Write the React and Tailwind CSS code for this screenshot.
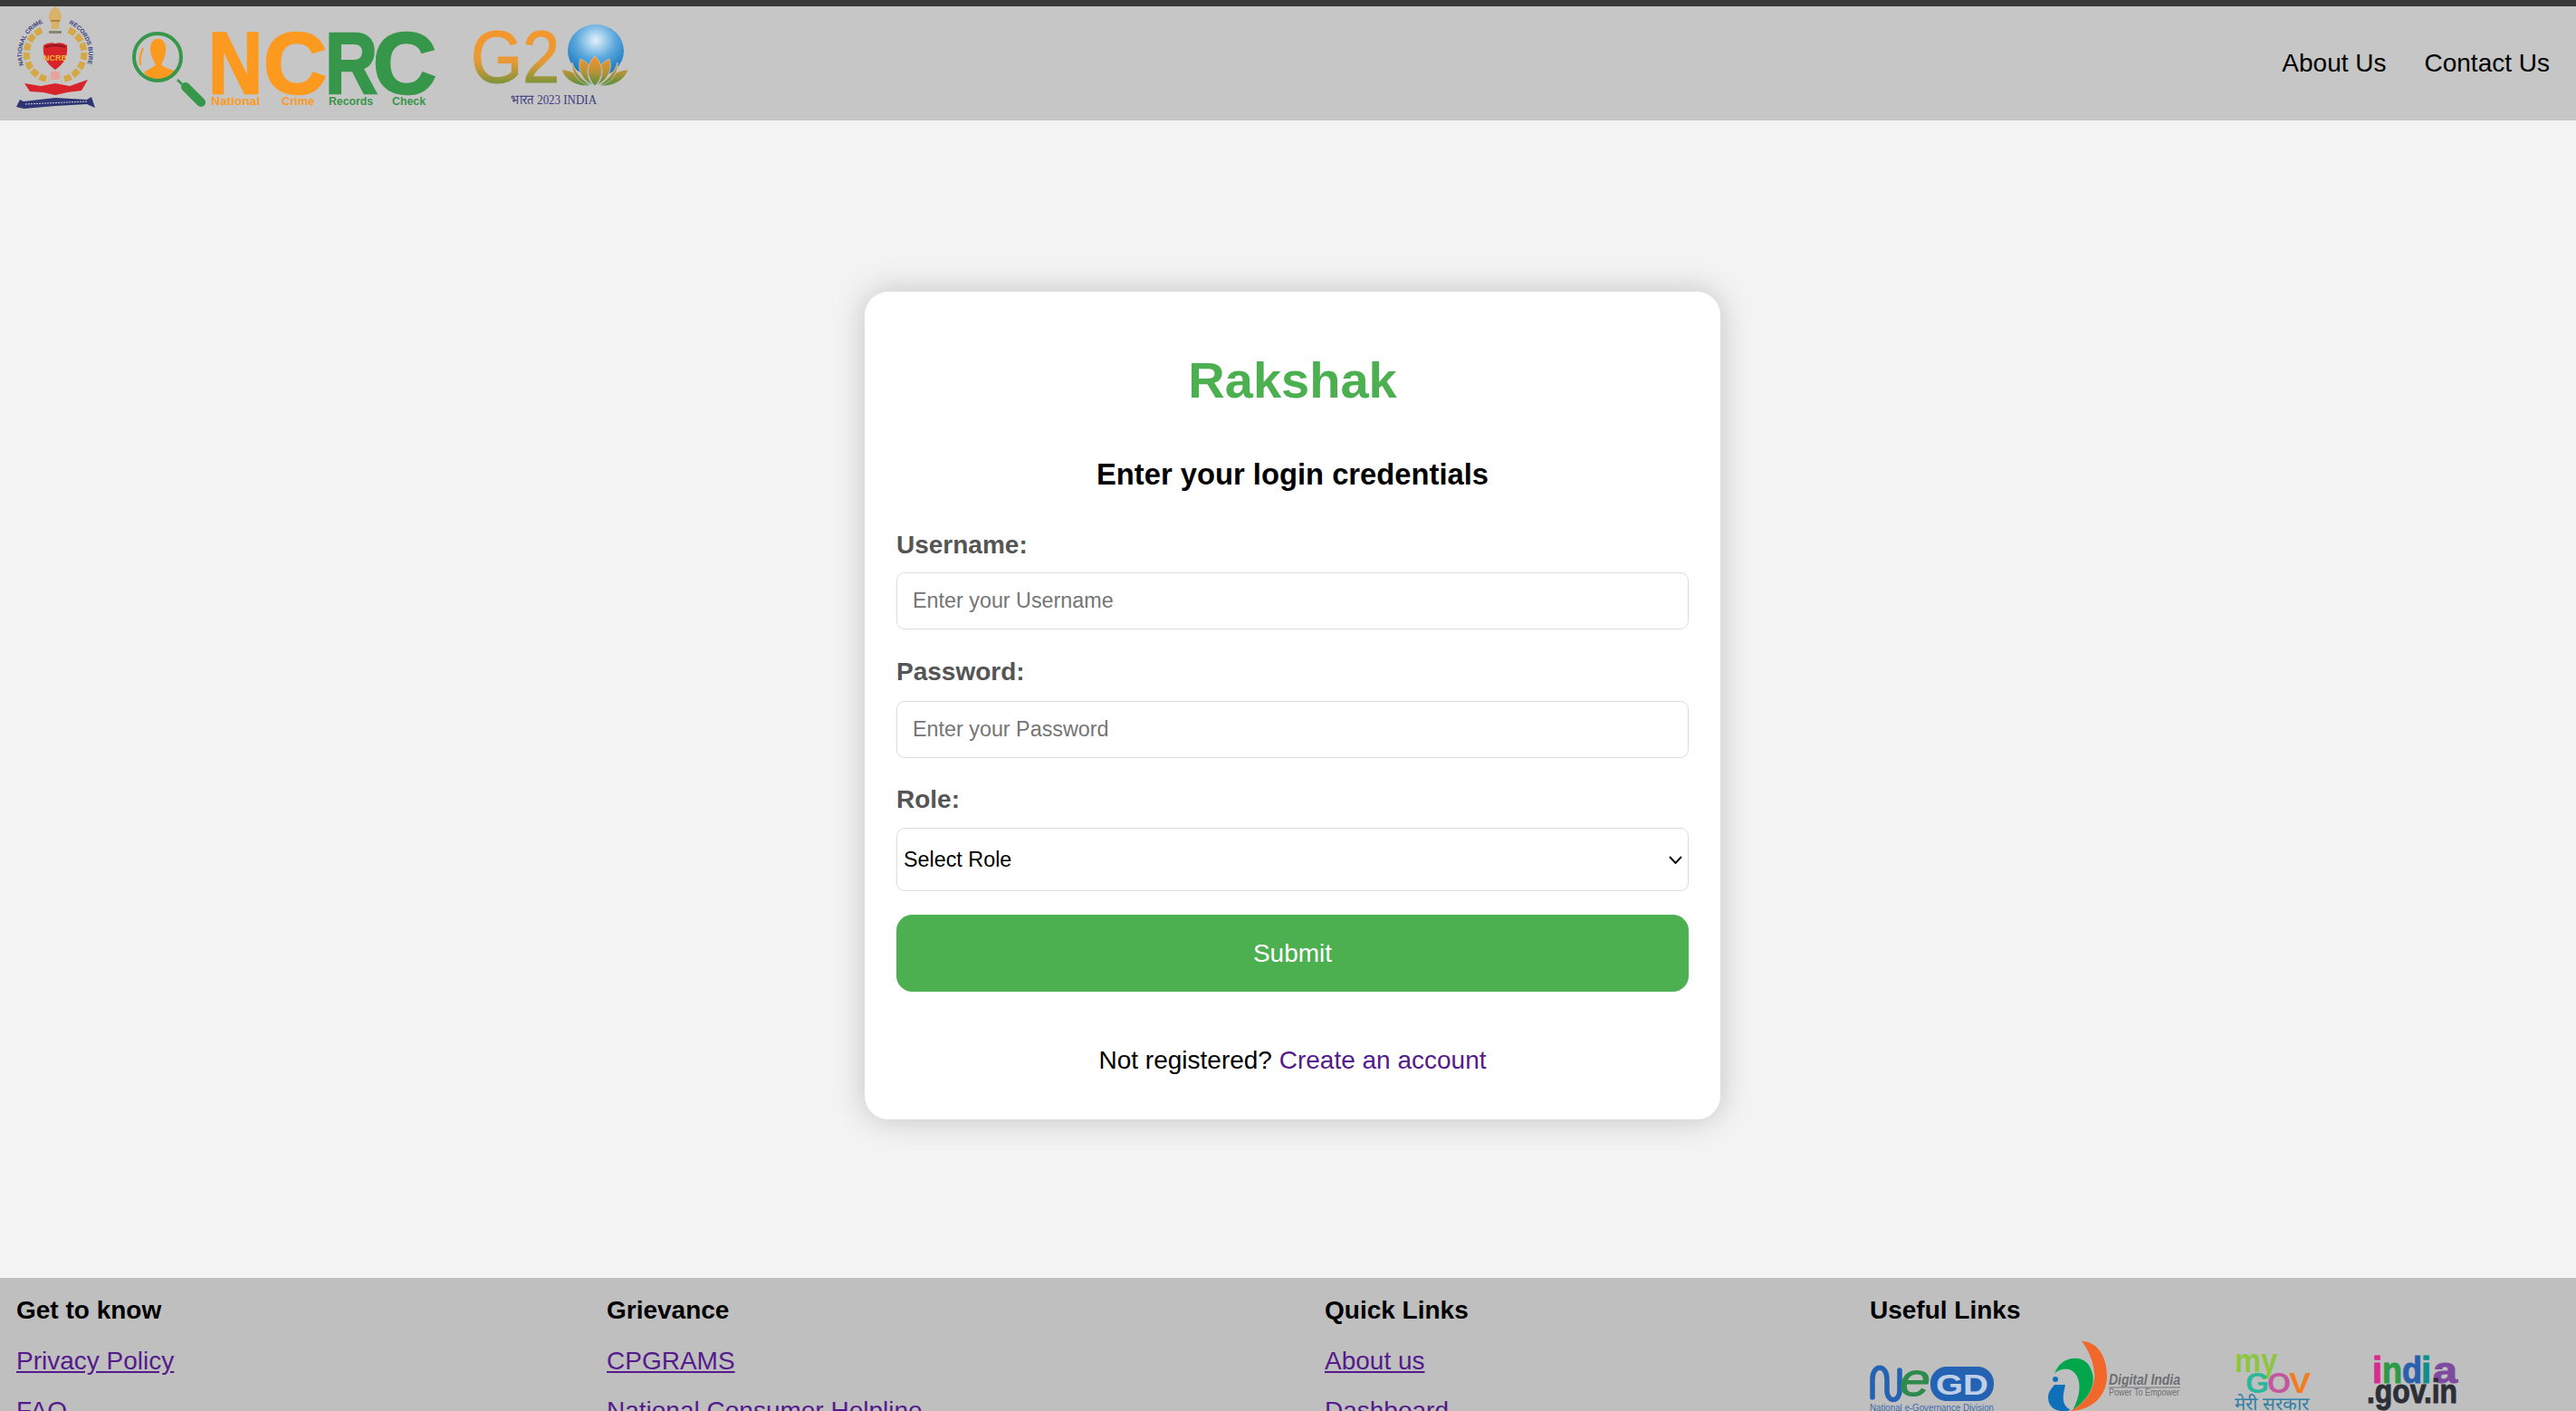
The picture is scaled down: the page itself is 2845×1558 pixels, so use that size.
import React from "react";

const FONT = "Liberation Sans, Arial, sans-serif";

// state emblem + bureau crest
const Emblem = () => (
  <svg width="87" height="113" viewBox="0 0 87 113" className="shrink-0 overflow-visible">
    <defs>
      <path id="arcL" d="M8 65 A37 37 0 0 1 28 19" fill="none" />
      <path id="arcR" d="M58 19 A37 37 0 0 1 78 65" fill="none" />
    </defs>
    <path d="M37 16 C34 10 38 3 43 0 C48 3 52 10 49 16 L47 20 L48 25 L38 25 L39 20 Z" fill="#d9b26a" />
    <rect x="38" y="15" width="10" height="2" fill="#a88748" />
    <rect x="36" y="27" width="14" height="3" fill="#8a8474" />
    <text fontSize="6.6" fontWeight="700" fill="#3b3f7d" fontFamily={FONT}>
      <textPath href="#arcL">NATIONAL CRIME</textPath>
    </text>
    <text fontSize="6.6" fontWeight="700" fill="#3b3f7d" fontFamily={FONT}>
      <textPath href="#arcR">RECORDS BUREAU</textPath>
    </text>
    <path d="M28 26 A29 29 0 0 0 36 81 M58 26 A29 29 0 0 1 50 81" fill="none" stroke="#d6a845" strokeWidth="7" strokeDasharray="8 2.5" />
    <path d="M30 43 Q36 39 43 41 Q50 39 56 43 Q58 60 43 70 Q28 60 30 43 Z" fill="#d8232a" />
    <path d="M32 45 Q43 41 54 45" fill="none" stroke="#8c1b1f" strokeWidth="2" />
    <text x="43" y="60" textAnchor="middle" fontSize="9" fontWeight="700" fill="#f0b93a" fontFamily={FONT}>NCRB</text>
    <rect x="38" y="72" width="10" height="9" rx="1" fill="#e7a3a0" />
    <path d="M9 85 L27 88 L43 85 L59 88 L79 81 L72 93 L56 95 L43 98 L30 95 L15 94 Z" fill="#d8232a" />
    <path d="M0 111 L4 103 L8 105 L43 101 L78 103 L83 100 L87 112 L78 108 L43 110 L8 113 Z" fill="#2f3473" />
    <path d="M10 108 L78 105" stroke="#cfd0e8" strokeWidth="1" strokeDasharray="2 1" />
  </svg>
);

const NcrcLogo = () => (
  <svg width="336" height="90" viewBox="0 0 336 90" className="shrink-0" style={{ fontFamily: FONT }}>
    <path d="M13 47 C19 42 24 42 26 38 C22 32 18 22 21 15 C24 8 33 8 36 15 C39 22 36 32 32 38 C34 42 44 43 50 47 C45 54 37 57 29 57 C22 57 17 53 13 47 Z" fill="#fb9a1f" />
    <path d="M9 39 C8 32 9 26 12 20" fill="none" stroke="#fb9a1f" strokeWidth="2" />
    <circle cx="28" cy="30" r="26" fill="none" stroke="#36964a" strokeWidth="4" />
    <path d="M50 55 L55 60" stroke="#36964a" strokeWidth="2.5" />
    <path d="M59 63 L76 80" stroke="#36964a" strokeWidth="10" strokeLinecap="round" />
    <g fontWeight="700" fontSize="97" strokeWidth="2.5">
      <text x="84" y="70" fill="#fb9a1f" stroke="#fb9a1f" textLength="60" lengthAdjust="spacingAndGlyphs">N</text>
      <text x="145" y="70" fill="#fb9a1f" stroke="#fb9a1f" textLength="70" lengthAdjust="spacingAndGlyphs">C</text>
      <text x="213" y="70" fill="#36964a" stroke="#36964a" textLength="58" lengthAdjust="spacingAndGlyphs">R</text>
      <text x="266" y="70" fill="#36964a" stroke="#36964a" textLength="70" lengthAdjust="spacingAndGlyphs">C</text>
    </g>
    <g fontWeight="700" fontSize="13">
      <text x="87" y="83" fill="#fb9a1f" textLength="54" lengthAdjust="spacingAndGlyphs">National</text>
      <text x="165" y="83" fill="#fb9a1f" textLength="36" lengthAdjust="spacingAndGlyphs">Crime</text>
      <text x="217" y="83" fill="#36964a" textLength="49" lengthAdjust="spacingAndGlyphs">Records</text>
      <text x="287" y="83" fill="#36964a" textLength="37" lengthAdjust="spacingAndGlyphs">Check</text>
    </g>
  </svg>
);

const G20Logo = () => (
  <svg width="175" height="100" viewBox="0 0 175 100" className="shrink-0 overflow-visible" style={{ fontFamily: FONT }}>
    <defs>
      <linearGradient id="g20" x1="0" y1="0" x2="0" y2="1">
        <stop offset="0.1" stopColor="#f7952c" />
        <stop offset="0.55" stopColor="#e99a35" />
        <stop offset="1" stopColor="#3b8f3f" />
      </linearGradient>
      <linearGradient id="lotus" gradientUnits="userSpaceOnUse" x1="0" y1="35" x2="0" y2="68">
        <stop offset="0" stopColor="#f7952c" />
        <stop offset="0.55" stopColor="#b59238" />
        <stop offset="1" stopColor="#4e8f3c" />
      </linearGradient>
      <radialGradient id="globe" cx="0.5" cy="0.3" r="0.7">
        <stop offset="0" stopColor="#e4f1fb" />
        <stop offset="0.5" stopColor="#5ba8dc" />
        <stop offset="1" stopColor="#1273b9" />
      </radialGradient>
    </defs>
    <text x="-3" y="64" fontSize="82" fill="url(#g20)" stroke="url(#g20)" strokeWidth="1.2" textLength="98" lengthAdjust="spacingAndGlyphs">G2</text>
    <ellipse cx="135" cy="29" rx="31" ry="29" fill="url(#globe)" />
    <g fill="url(#lotus)" stroke="#c6c6c6" strokeWidth="0.8">
      <path d="M97 50 C108 50 118 56 128 68 C112 68 102 62 97 50 Z" />
      <path d="M171 50 C160 50 150 56 140 68 C156 68 166 62 171 50 Z" />
      <path d="M109 42 C112 52 120 62 130 67 C120 67 108 58 109 42 Z" />
      <path d="M159 42 C156 52 148 62 138 67 C148 67 160 58 159 42 Z" />
      <path d="M118 38 C122 40 126 42 128 46 C124 52 126 60 132 67 C120 62 114 50 118 38 Z" />
      <path d="M150 38 C146 40 142 42 140 46 C144 52 142 60 136 67 C148 62 154 50 150 38 Z" />
      <path d="M134 35 C124 44 124 58 134 68 C144 58 144 44 134 35 Z" />
    </g>
    <text x="41" y="88" fontSize="15" fill="#3d3a80" fontFamily="Liberation Serif, serif" textLength="95" lengthAdjust="spacingAndGlyphs">भारत 2023 INDIA</text>
  </svg>
);

const NegdLogo = () => (
  <svg width="180" height="90" viewBox="0 0 180 90" className="shrink-0" style={{ fontFamily: FONT }}>
    <path d="M3 62 V42 C3 25 19 25 19 42 V54 C19 68 33 68 33 54 V32" fill="none" stroke="#2463b4" strokeWidth="5.5" strokeLinecap="round" />
    <text x="33" y="60" fontSize="52" fontStyle="italic" fill="#2e8b4c" stroke="#2e8b4c" strokeWidth="1" textLength="34" lengthAdjust="spacingAndGlyphs">e</text>
    <rect x="67" y="28" width="70" height="38" rx="18" fill="#2463b4" />
    <text x="73" y="59" fontSize="32" fontWeight="700" fill="#bfcfe6" textLength="58" lengthAdjust="spacingAndGlyphs">GD</text>
    <text x="0" y="77" fontSize="10" fill="#3a6cab" textLength="137" lengthAdjust="spacingAndGlyphs">National e-Governance Division</text>
  </svg>
);

const DigitalIndiaLogo = () => (
  <svg width="191" height="90" viewBox="0 0 191 90" className="shrink-0" style={{ fontFamily: FONT }}>
    <path d="M38 0 C56 0 66 18 66 38 C66 60 50 76 26 77 C42 68 54 52 52 34 C50 18 44 8 38 0 Z" fill="#f2682a" />
    <path d="M8 36 C14 18 34 14 44 24 C54 36 56 56 28 76 C38 58 38 40 28 33 C22 29 12 31 8 36 Z" fill="#03a64a" />
    <path d="M8 48 L20 48 C18 58 14 70 26 76 C12 80 1 74 1 62 C1 56 5 52 8 48 Z" fill="#0e70b8" />
    <circle cx="9" cy="42" r="3" fill="#0e70b8" />
    <text x="68" y="48" fontSize="17" fontStyle="italic" fontWeight="700" fill="#6d6e71" textLength="79" lengthAdjust="spacingAndGlyphs">Digital India</text>
    <rect x="68" y="50" width="79" height="2" fill="#9a9a9a" />
    <text x="68" y="60" fontSize="10" fill="#6d6e71" textLength="78" lengthAdjust="spacingAndGlyphs">Power To Empower</text>
  </svg>
);

const MyGovLogo = () => (
  <svg width="130" height="90" viewBox="0 0 130 90" className="shrink-0" style={{ fontFamily: FONT }}>
    <text x="0" y="34" fontSize="36" fontWeight="700" fill="#8cc63f" textLength="47" lengthAdjust="spacingAndGlyphs">my</text>
    <text x="12" y="57" fontSize="32" fontWeight="700" fill="#2bb79a" textLength="26" lengthAdjust="spacingAndGlyphs">G</text>
    <text x="36" y="57" fontSize="32" fontWeight="700" fill="#c2569f" textLength="26" lengthAdjust="spacingAndGlyphs">O</text>
    <text x="60" y="57" fontSize="32" fontWeight="700" fill="#f47b20" textLength="24" lengthAdjust="spacingAndGlyphs">V</text>
    <text x="0" y="76" fontSize="20" fill="#2f7fa8" textLength="82" lengthAdjust="spacingAndGlyphs">मेरी सरकार</text>
  </svg>
);

const IndiaGovLogo = () => (
  <svg width="110" height="90" viewBox="0 0 110 90" className="shrink-0" style={{ fontFamily: FONT }}>
    <g fontSize="40" fontWeight="700">
      <text x="6" y="46" fill="#d92a8f" stroke="#d92a8f">i</text>
      <text x="17" y="46" fill="#2e9a46" stroke="#2e9a46" textLength="22" lengthAdjust="spacingAndGlyphs">n</text>
      <text x="39" y="46" fill="#2a5fad" stroke="#2a5fad" textLength="22" lengthAdjust="spacingAndGlyphs">d</text>
      <text x="60" y="46" fill="#0d8f8c" stroke="#0d8f8c">i</text>
      <text x="73" y="46" fill="#7d4a9e" stroke="#7d4a9e" textLength="27" lengthAdjust="spacingAndGlyphs">a</text>
    </g>
    <text x="0" y="68" fontSize="36" fontWeight="700" fill="#2c2f36" stroke="#2c2f36" textLength="100" lengthAdjust="spacingAndGlyphs">.gov.in</text>
  </svg>
);

const Field = ({ label, placeholder, type, gap }) => (
  <div className="flex flex-col">
    <label className={`text-[28px] leading-[32px] font-bold text-[#555555] ${gap}`}>{label}</label>
    <input
      type={type}
      placeholder={placeholder}
      className="h-[63px] w-full px-[17px] bg-white border border-[#dddddd] rounded-[9px] text-[23.33px] placeholder:text-[#757575] outline-none"
    />
  </div>
);

const FooterCol = ({ title, links, className }) => (
  <div className={className}>
    <h4 className="text-[28px] leading-[32px] font-bold text-black">{title}</h4>
    <div className="mt-[24px] flex flex-col gap-[23px]">
      {links.map((l) => (
        <a key={l} href="#" className="text-[28px] leading-[32px] text-[#551a8b] underline whitespace-nowrap">
          {l}
        </a>
      ))}
    </div>
  </div>
);

export default function App() {
  return (
    <div className="h-screen overflow-hidden bg-[#f3f3f3] font-['Liberation_Sans',Arial,sans-serif] text-black">
      {/* header */}
      <header className="h-[133px] border-t-[7px] border-[#3a3a3a] bg-[#c6c6c6] flex items-start justify-between pl-[18px] pr-[29px]">
        <div className="flex items-start">
          <Emblem />
          <div className="ml-[41px] mt-[26px]"><NcrcLogo /></div>
          <div className="ml-[41px] mt-[20px]"><G20Logo /></div>
        </div>
        <nav className="flex gap-[42px] mt-[47px] text-[28px] leading-[32px]">
          <a href="#">About Us</a>
          <a href="#">Contact Us</a>
        </nav>
      </header>

      {/* login card */}
      <main className="h-[1278px] flex justify-center items-start pt-[189px] pl-[10px]">
        <div className="w-[945px] h-[914px] bg-white rounded-[26px] shadow-[0_0_35px_rgba(0,0,0,0.2)] px-[35px] pt-[66px]">
          <h1 className="text-[56px] leading-[64px] font-bold text-[#4caf50] text-center">Rakshak</h1>
          <h3 className="mt-[53px] text-[32.75px] leading-[38px] font-bold text-center">Enter your login credentials</h3>
          <form className="mt-[43px] flex flex-col">
            <Field label="Username:" placeholder="Enter your Username" type="text" gap="mb-[14px]" />
            <div className="mt-[31px]">
              <Field label="Password:" placeholder="Enter your Password" type="password" gap="mb-[16px]" />
            </div>
            <label className="mt-[30px] mb-[15px] text-[28px] leading-[32px] font-bold text-[#555555]">Role:</label>
            <div className="relative">
              <select className="h-[70px] w-full pl-[7px] appearance-none bg-white border border-[#dddddd] rounded-[9px] text-[23.33px] text-black outline-none">
                <option>Select Role</option>
              </select>
              <svg width="15" height="9" viewBox="0 0 15 9" className="absolute right-[7px] top-[31px] pointer-events-none">
                <path d="M1 1 L7.5 8 L14 1" fill="none" stroke="#111111" strokeWidth="2" />
              </svg>
            </div>
            <button type="button" className="mt-[26px] h-[85px] w-full rounded-[17.5px] bg-[#4caf50] text-white text-[28px]">
              Submit
            </button>
          </form>
          <p className="mt-[60px] text-[28px] leading-[32px] text-center">
            Not registered? <a href="#" className="text-[#551a8b]">Create an account</a>
          </p>
        </div>
      </main>

      {/* footer */}
      <footer className="bg-[#bfbfbf] pl-[18px] pt-[20px] flex items-start h-[400px]">
        <FooterCol className="w-[652px]" title="Get to know" links={["Privacy Policy", "FAQ"]} />
        <FooterCol className="w-[793px]" title="Grievance" links={["CPGRAMS", "National Consumer Helpline"]} />
        <FooterCol className="w-[602px]" title="Quick Links" links={["About us", "Dashboard"]} />
        <div>
          <h4 className="text-[28px] leading-[32px] font-bold">Useful Links</h4>
          <div className="mt-[18px] flex gap-[16px]">
            <NegdLogo />
            <DigitalIndiaLogo />
            <MyGovLogo />
            <IndiaGovLogo />
          </div>
        </div>
      </footer>
    </div>
  );
}
